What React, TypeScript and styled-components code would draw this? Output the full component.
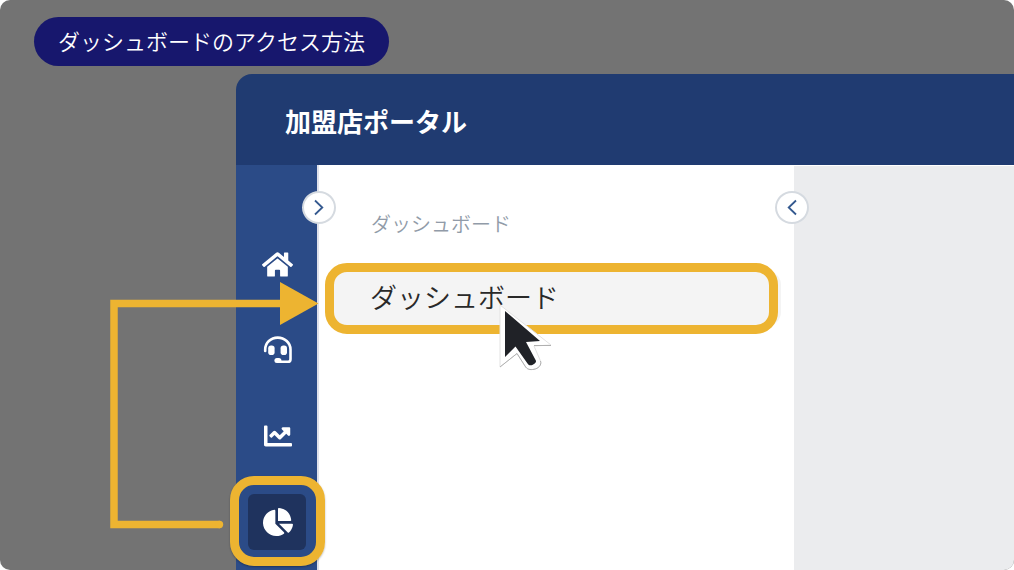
import React from "react";
import styled, { createGlobalStyle, css } from "styled-components";
import { FaHome, FaChartLine, FaChartPie } from "react-icons/fa";

const GlobalStyle = createGlobalStyle`
  *, *::before, *::after { box-sizing: border-box; }
  body {
    margin: 0;
    background: #fff;
    font-family: "Noto Sans CJK JP", "Noto Sans", sans-serif;
  }
`;

const highlight = "#edb431";

const Stage = styled.main`
  position: relative;
  display: flex;
  flex-direction: column;
  align-items: flex-start;
  gap: 8px;
  min-height: 100vh;
  padding-top: 17px;
  background: #737373;
  border-radius: 10px;
  overflow: hidden;
`;

const Caption = styled.h1`
  margin: 0 0 0 34px;
  padding: 0 24px 2px;
  border-radius: 25px;
  background: #17176d;
  color: #fff;
  font-size: 22px;
  font-weight: 350;
  line-height: 47px;
`;

const Portal = styled.section`
  display: flex;
  flex: 1;
  flex-direction: column;
  align-self: stretch;
  margin-left: 236px;
`;

const PortalHeader = styled.header`
  padding: 27px 49px 24px;
  border-radius: 16px 0 0 0;
  background: #203b71;
  color: #fff;
`;

const PortalTitle = styled.h2`
  margin: 0;
  font-size: 26px;
  font-weight: 700;
  line-height: 40px;
`;

const PortalBody = styled.div`
  display: flex;
  flex: 1;
`;

const Rail = styled.nav`
  display: flex;
  flex-direction: column;
  align-items: center;
  gap: 30px;
  width: 81px;
  padding: 71px 0 20px;
  background: #2b4b87;
`;

const RailButton = styled.button<{ $active?: boolean }>`
  position: relative;
  display: grid;
  place-items: center;
  width: 58px;
  height: 56px;
  padding: 0 0 0 2px;
  border: 0;
  border-radius: 6px;
  background: transparent;
  color: #fff;
  cursor: pointer;

  ${({ $active }) =>
    $active &&
    css`
      background: #1f335e;

      &::after {
        content: "";
        position: absolute;
        z-index: 2;
        inset: -18px -19px -16px -18px;
        border: 9px solid ${highlight};
        border-radius: 24px;
        box-shadow: 0 1px 2px rgba(0, 0, 0, 0.3);
      }
    `}
`;

const Panel = styled.aside`
  position: relative;
  width: 477px;
  padding: 44px 16px 0 6px;
  border-left: 2px solid #dfe1ea;
  background: #fff;
`;

const PanelLabel = styled.h3`
  margin: 0 0 24px;
  padding-left: 46px;
  color: #919ba8;
  font-size: 20px;
  font-weight: 350;
  line-height: 30px;
`;

const PanelLink = styled.a`
  position: relative;
  display: block;
  padding: 0 36px 4px;
  border: 9px solid ${highlight};
  border-radius: 22px;
  background: #f4f4f4;
  box-shadow: 11px 0 0 -8px #f4f4f4;
  color: #292929;
  font-size: 27px;
  font-weight: 350;
  line-height: 49px;
  text-decoration: none;
`;

const Toggle = styled.button<{ $side: "left" | "right" }>`
  position: absolute;
  z-index: 1;
  top: 26px;
  ${({ $side }) => ($side === "left" ? "left: -17px" : "right: -15px")};
  display: grid;
  place-items: center;
  width: 34px;
  height: 33px;
  padding: 0;
  border: 2px solid #d5dae0;
  border-radius: 50%;
  background: #fff;
  cursor: pointer;
`;

const Content = styled.div`
  flex: 1;
  border-top: 1px solid #fff;
  background: #ebecee;
`;

const Cursor = styled.svg`
  position: absolute;
  z-index: 3;
  top: 30px;
  left: 164px;
  pointer-events: none;
`;

const Route = styled.svg`
  position: absolute;
  z-index: 3;
  top: 280px;
  left: 108px;
  pointer-events: none;
`;

function HeadsetIcon() {
  return (
    <svg width="30" height="28" viewBox="0 0 30 28" fill="none" aria-hidden="true">
      <path
        d="M2.2 15v-1.500C2.200 6.800 7.800 1.600 14.700 1.600S27.500 6.800 27.500 13.500v9.700a2.600 2.600 0 0 1-2.600 2.600h-8"
        stroke="currentColor"
        strokeWidth="2.6"
        strokeLinecap="round"
      />
      <rect x="5.2" y="9.4" width="6.4" height="9.6" rx="2.8" fill="currentColor" />
      <rect x="17.6" y="9.4" width="6.4" height="9.6" rx="2.8" fill="currentColor" />
      <rect x="11.4" y="22" width="7" height="5" rx="2.5" fill="currentColor" />
    </svg>
  );
}

function Chevron({ direction }: { direction: "left" | "right" }) {
  return (
    <svg width="10" height="17" viewBox="0 0 10 17" fill="none" aria-hidden="true">
      <path
        d={direction === "right" ? "M1 1.500 8.300 8.500 1 15.500" : "M9 1.500 1.700 8.500 9 15.500"}
        stroke="#34598f"
        strokeWidth="1.8"
      />
    </svg>
  );
}

export default function App() {
  return (
    <>
      <GlobalStyle />
      <Stage>
        <Caption>ダッシュボードのアクセス方法</Caption>
        <Portal>
          <PortalHeader>
            <PortalTitle>加盟店ポータル</PortalTitle>
          </PortalHeader>
          <PortalBody>
            <Rail>
              <RailButton type="button" aria-label="ホーム">
                <FaHome size={31} />
              </RailButton>
              <RailButton type="button" aria-label="サポート">
                <HeadsetIcon />
              </RailButton>
              <RailButton type="button" aria-label="レポート">
                <FaChartLine size={28} />
              </RailButton>
              <RailButton type="button" aria-label="ダッシュボード" $active>
                <FaChartPie size={30} />
              </RailButton>
            </Rail>
            <Panel>
              <Toggle type="button" aria-label="メニューを開く" $side="left">
                <Chevron direction="right" />
              </Toggle>
              <Toggle type="button" aria-label="メニューを閉じる" $side="right">
                <Chevron direction="left" />
              </Toggle>
              <PanelLabel>ダッシュボード</PanelLabel>
              <PanelLink href="#dashboard">
                ダッシュボード
                <Cursor width="58" height="72" viewBox="0 0 58 72" aria-hidden="true">
                  <path
                    d="M2 3v62l17-13.500L27 64c2 3.500 5 4 9 3.300s8-4 6.500-8.300L36 44l17-1z"
                    fill="#fff"
                    stroke="#e2e2e2"
                    strokeWidth="1"
                  />
                  <path d="M36 43.500h17M2 65l17-13.500L27 64c2 3.500 5 4 9 3.300s8-4 6.500-8.300" fill="none" stroke="#b0b0b0" />
                  <path d="M7 9v46l10.500-10.500L29.500 61.500c1.200 2 3.200 2.300 5.300 1.300s4-2.600 2.900-4.600L28 40l14-1z" fill="#202227" />
                </Cursor>
              </PanelLink>
            </Panel>
            <Content />
          </PortalBody>
        </Portal>
        <Route width="212" height="252" viewBox="0 0 212 252" aria-hidden="true">
          <path d="M175 23.500H6V244.500H112" fill="none" stroke={highlight} strokeWidth="7.500" />
          <circle cx="111.500" cy="244.500" r="3.700" fill={highlight} />
          <path d="M172 2v43l38.500-21.500z" fill={highlight} />
        </Route>
      </Stage>
    </>
  );
}
